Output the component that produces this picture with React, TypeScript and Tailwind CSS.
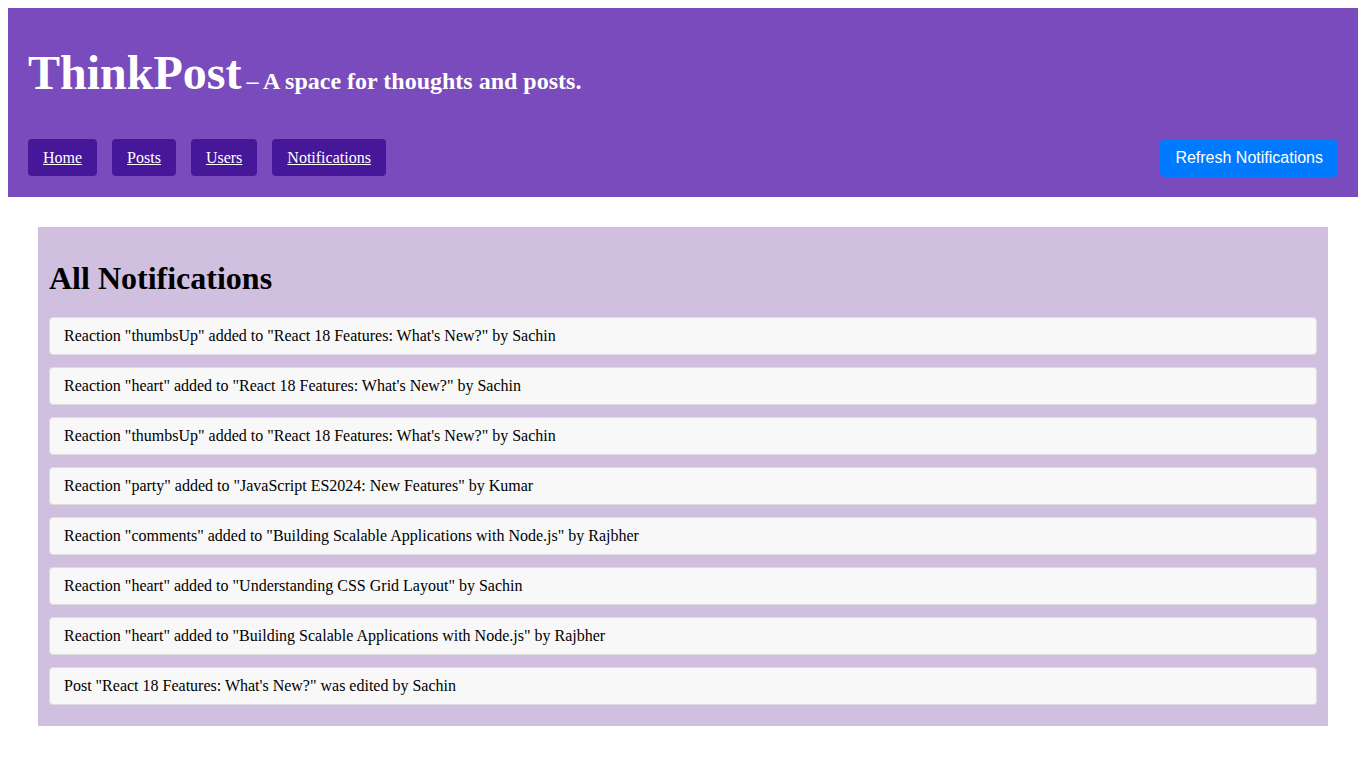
const notifications = [
  'Reaction "thumbsUp" added to "React 18 Features: What\'s New?" by Sachin',
  'Reaction "heart" added to "React 18 Features: What\'s New?" by Sachin',
  'Reaction "thumbsUp" added to "React 18 Features: What\'s New?" by Sachin',
  'Reaction "party" added to "JavaScript ES2024: New Features" by Kumar',
  'Reaction "comments" added to "Building Scalable Applications with Node.js" by Rajbher',
  'Reaction "heart" added to "Understanding CSS Grid Layout" by Sachin',
  'Reaction "heart" added to "Building Scalable Applications with Node.js" by Rajbher',
  'Post "React 18 Features: What\'s New?" was edited by Sachin',
]

const navLinks = ["Home", "Posts", "Users", "Notifications"]

export default function App() {
  return (
    <div className="min-h-screen bg-white p-2 font-['Liberation_Serif',serif] text-black">
      <header className="bg-[#794bbc] p-5">
        <h1 className="mt-[18px] text-[48px] font-bold leading-[53px] text-white">
          ThinkPost
          <span className="ml-[5px] text-[24px]">– A space for thoughts and posts.</span>
        </h1>
        <nav className="mt-[31px] flex items-start justify-between">
          <div className="flex gap-[15px]">
            {navLinks.map((l) => (
              <a
                key={l}
                href="#"
                className="rounded-[4px] bg-[#47179a] px-[15px] py-[10px] text-base leading-[17px] text-white underline"
              >
                {l}
              </a>
            ))}
          </div>
          <button className="rounded-[5px] bg-[#007bff] px-[15px] py-[10px] font-['Liberation_Sans',Arial,sans-serif] text-base leading-[18px] text-white">
            Refresh Notifications
          </button>
        </nav>
      </header>

      <main className="mx-[30px] mt-[30px] bg-[#d1bfe0] px-[11px] pb-[21px] pt-[33px]">
        <h2 className="mb-[20px] text-[32px] font-bold leading-[37px]">All Notifications</h2>
        <ul className="flex flex-col gap-3">
          {notifications.map((n, i) => (
            <li
              key={i}
              className="rounded-[4px] border border-[#dddddd] bg-[#f8f8f8] px-[14px] py-[9px] text-base leading-[18px]"
            >
              {n}
            </li>
          ))}
        </ul>
      </main>
    </div>
  )
}
